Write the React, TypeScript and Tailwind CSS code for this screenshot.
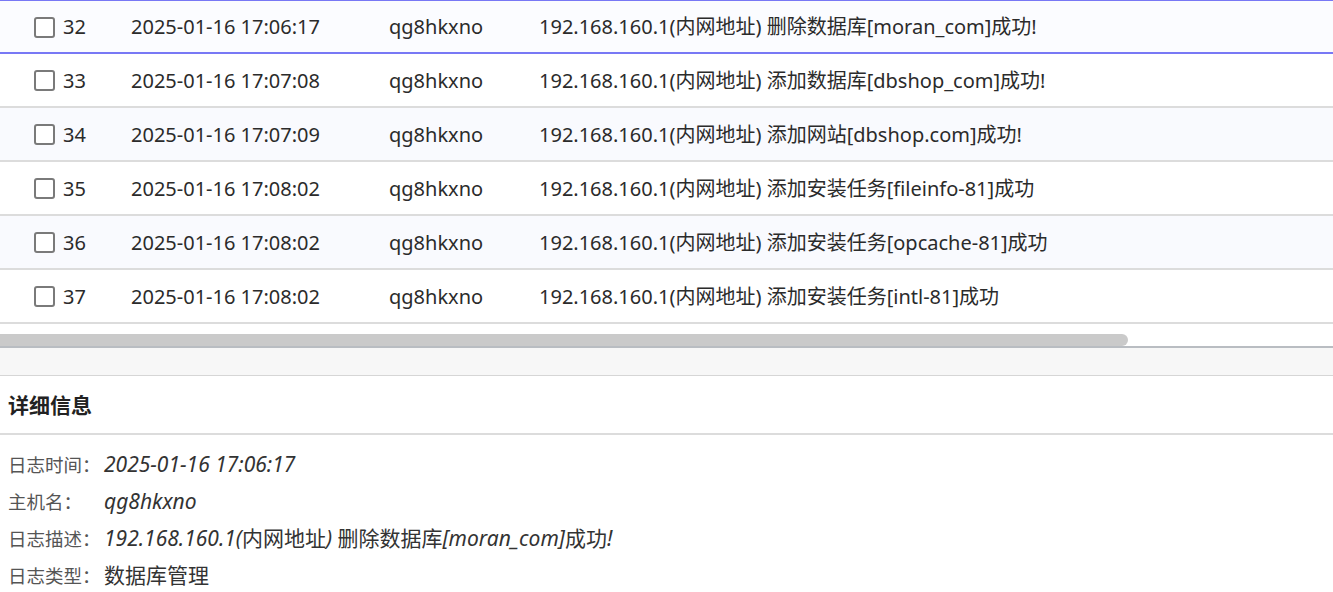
const rows = [
  { id: 32, time: "2025-01-16 17:06:17", host: "qg8hkxno", desc: "192.168.160.1(内网地址) 删除数据库[moran_com]成功!" },
  { id: 33, time: "2025-01-16 17:07:08", host: "qg8hkxno", desc: "192.168.160.1(内网地址) 添加数据库[dbshop_com]成功!" },
  { id: 34, time: "2025-01-16 17:07:09", host: "qg8hkxno", desc: "192.168.160.1(内网地址) 添加网站[dbshop.com]成功!" },
  { id: 35, time: "2025-01-16 17:08:02", host: "qg8hkxno", desc: "192.168.160.1(内网地址) 添加安装任务[fileinfo-81]成功" },
  { id: 36, time: "2025-01-16 17:08:02", host: "qg8hkxno", desc: "192.168.160.1(内网地址) 添加安装任务[opcache-81]成功" },
  { id: 37, time: "2025-01-16 17:08:02", host: "qg8hkxno", desc: "192.168.160.1(内网地址) 添加安装任务[intl-81]成功" },
];

const Row = ({ row, index }: { row: (typeof rows)[number]; index: number }) => {
  const selected = index === 0;
  return (
    <div
      className={
        "flex items-center h-[54px] pt-[1px] text-[20px] text-[#2b2b2b] " +
        (selected
          ? "bg-[#fbfcff] border-t border-t-[#7878f5] border-b-2 border-b-[#7878f5] shadow-[0_1px_0_#dadada]"
          : index % 2 === 0
          ? "bg-[#f9fafe] border-b-2 border-b-[#dcdcdc]"
          : "bg-white border-b-2 border-b-[#dcdcdc]")
      }
    >
      <div className="w-[131px] flex items-center pl-[34px] shrink-0">
        <span className="w-[21px] h-[21px] border-2 border-[#7a7a7a] rounded-[3px] bg-white" />
        <span className="ml-[8px]">{row.id}</span>
      </div>
      <div className="w-[258px] shrink-0">{row.time}</div>
      <div className="w-[150px] shrink-0">{row.host}</div>
      <div className="whitespace-nowrap">{row.desc}</div>
    </div>
  );
};

const Detail = ({ label, value, italic = true }: { label: string; value: React.ReactNode; italic?: boolean }) => (
  <div className="flex items-center h-[37px] text-[21px]">
    <span className="w-[96px] text-[#555] text-[18.5px]">{label}</span>
    <span className={"text-[#333] " + (italic ? "italic" : "")}>{value}</span>
  </div>
);

export default function App() {
  return (
    <div className="w-[1333px] h-[592px] overflow-hidden bg-white font-['Noto_Sans','Noto_Sans_CJK_SC',sans-serif]">
      <div>
        {rows.map((r, i) => (
          <Row key={r.id} row={r} index={i} />
        ))}
      </div>
      <div className="h-[22px] bg-white flex items-end">
        <div className="w-[1128px] h-[12px] bg-[#cacaca] rounded-r-full" />
      </div>
      <div className="h-[30px] bg-[#f7f7f7] border-t-2 border-t-[#b9bdc2] border-b border-b-[#d6d6d6]" />
      <div className="h-[59px] flex items-center pt-[3px] px-[8px] border-b-2 border-b-[#dcdcdc]">
        <span className="text-[21px] font-bold text-[#222]">详细信息</span>
      </div>
      <div className="px-[8px] pt-[11px]">
        <Detail label="日志时间：" value="2025-01-16 17:06:17" />
        <Detail label="主机名：" value="qg8hkxno" />
        <Detail
          label="日志描述："
          value={
            <>
              192.168.160.1(<span className="not-italic">内网地址</span>) <span className="not-italic">删除数据库</span>[moran_com]<span className="not-italic">成功</span>!
            </>
          }
        />
        <Detail label="日志类型：" value="数据库管理" italic={false} />
      </div>
    </div>
  );
}
